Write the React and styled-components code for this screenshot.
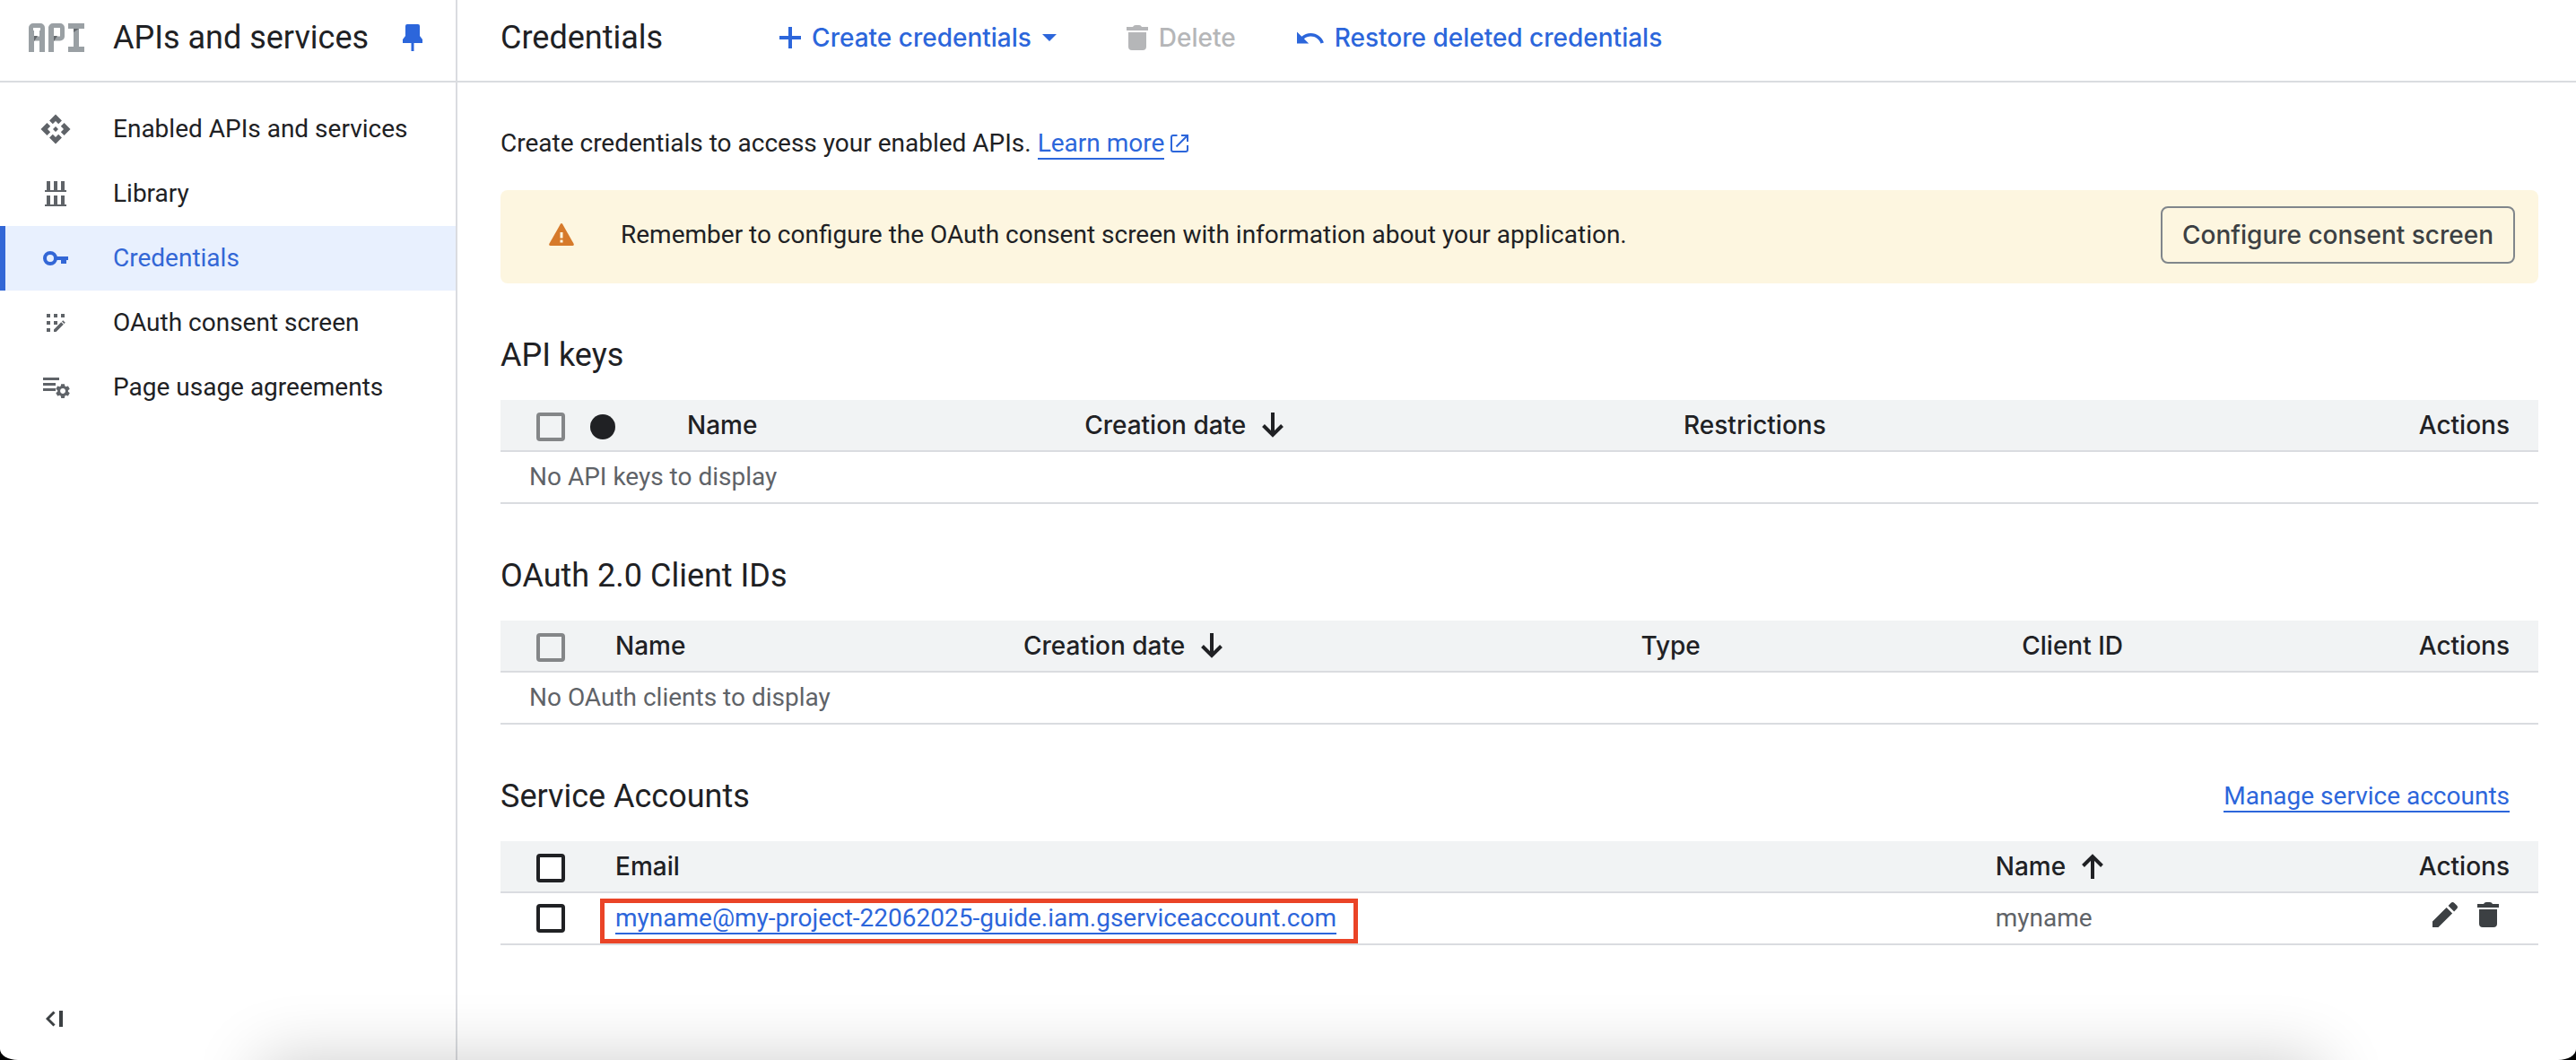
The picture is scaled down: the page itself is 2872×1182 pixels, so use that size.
import React from 'react';
import styled, { createGlobalStyle } from 'styled-components';

const color = {
  text: '#202124',
  muted: '#5f6368',
  icon: '#3c4043',
  link: '#2c66db',
  active: '#3367d6',
  activeBg: '#e8f0fe',
  line: '#dadce0',
  head: '#f1f3f4',
  disabled: '#b5b6b8',
  banner: '#fdf6e0',
  warning: '#d67a2b',
};

const body = "Roboto, 'Liberation Sans', sans-serif";
const label = "Inter, 'Liberation Sans', sans-serif";

const GlobalStyle = createGlobalStyle`
  *, *::before, *::after { box-sizing: border-box; }
  body {
    margin: 0;
    background: #000;
    color: ${color.text};
    font: 400 28px/32px ${body};
  }
  svg { display: block; flex: none; }
  button { font: inherit; color: inherit; background: none; border: 0; padding: 0; cursor: pointer; }
`;

/* ---------- layout ---------- */

const Page = styled.div`
  display: grid;
  grid-template-columns: 510px minmax(0, 1fr);
  min-height: 100vh;
  background: #fff;
  border-radius: 0 0 20px 20px / 0 0 12px 12px;
  overflow: hidden;
`;

const Sidebar = styled.aside`
  display: flex;
  flex-direction: column;
  border-right: 2px solid ${color.line};
`;

const Bar = styled.header`
  display: flex;
  align-items: center;
  height: 92px;
  padding: 0 0 6px;
  border-bottom: 2px solid ${color.line};
`;

const SidebarBar = styled(Bar)`
  padding-left: 32px;
  padding-right: 37px;
  gap: 32px;
`;

const MainBar = styled(Bar)`
  padding-left: 48px;
  gap: 130px;
`;

const Title = styled.h1`
  margin: 0;
  font-size: 36px;
  line-height: 44px;
  font-weight: 400;
`;

const SidebarTitle = styled(Title).attrs({ as: 'h2' })`
  flex: 1;
`;

const Nav = styled.nav`
  display: flex;
  flex-direction: column;
  flex: 1;
  padding-top: 16px;
`;

const NavLink = styled.a`
  display: flex;
  align-items: center;
  gap: 46px;
  height: 72px;
  padding-left: 38px;
  border-left: 6px solid ${(p) => (p.$active ? color.active : 'transparent')};
  background: ${(p) => (p.$active ? color.activeBg : 'transparent')};
  color: ${(p) => (p.$active ? color.active : color.text)};
  text-decoration: none;

  svg { color: ${(p) => (p.$active ? color.active : color.muted)}; }
`;

const CollapseButton = styled.button`
  display: flex;
  align-items: center;
  align-self: flex-start;
  height: 48px;
  margin-bottom: 22px;
  padding: 0 16px 0 51px;
  color: ${color.icon};
`;

const PinButton = styled.button`
  color: ${color.link};
`;

const Toolbar = styled.div`
  display: flex;
  align-items: center;
  gap: 68px;
`;

const ToolButton = styled.button`
  display: flex;
  align-items: center;
  gap: 12px;
  font-family: ${label};
  font-weight: 500;
  color: ${color.link};

  &:disabled { color: ${color.disabled}; cursor: default; }
`;

const Content = styled.main`
  padding: 50px 42px 48px 48px;
`;

const Intro = styled.p`
  display: flex;
  align-items: center;
  gap: 7px;
  margin: 0 0 34px;
  line-height: 36px;
`;

const Link = styled.a`
  display: inline-block;
  padding-top: 2px;
  line-height: 32px;
  border-bottom: 2px solid ${color.link};
  color: ${color.link};
  text-decoration: none;
`;

const Banner = styled.div`
  display: flex;
  align-items: center;
  gap: 52px;
  padding: 18px 26px 22px 54px;
  border-radius: 8px;
  background: ${color.banner};
`;

const BannerText = styled.span`
  flex: 1;
`;

const OutlineButton = styled.button`
  height: 64px;
  padding: 0 22px;
  border: 2px solid #80868b;
  border-radius: 8px;
  font-family: ${label};
  font-weight: 500;
  color: ${color.icon};
`;

const Section = styled.section`
  margin-top: 58px;
`;

const SectionHead = styled.div`
  display: flex;
  align-items: center;
  justify-content: space-between;
  height: 44px;
  margin-bottom: 28px;
  padding-right: 32px;
`;

const SectionTitle = styled(Title).attrs({ as: 'h3' })``;

/* ---------- tables ---------- */

const Table = styled.table`
  width: 100%;
  table-layout: fixed;
  border-collapse: separate;
  border-spacing: 0;
`;

const Th = styled.th`
  width: ${(p) => p.$width || 'auto'};
  height: 58px;
  padding: 0 ${(p) => (p.$end ? '32px' : '0')} 0 0;
  border-bottom: 2px solid ${color.line};
  background: ${color.head};
  font-family: ${label};
  font-weight: 500;
  text-align: ${(p) => (p.$end ? 'right' : 'left')};
  vertical-align: middle;
`;

const Td = styled.td`
  height: 58px;
  padding: 0 0 0 ${(p) => (p.$inset ? '32px' : '0')};
  border-bottom: 2px solid ${color.line};
  color: ${color.muted};
  vertical-align: middle;
`;

const SelectCell = styled.div`
  display: flex;
  align-items: center;
  gap: 28px;
  padding: ${(p) => (p.$head ? '4px' : '0')} 0 0 40px;
`;

const SortLabel = styled.span`
  display: flex;
  align-items: center;
  gap: 18px;
`;

const Checkbox = styled.input.attrs({ type: 'checkbox' })`
  appearance: none;
  width: 32px;
  height: 32px;
  margin: 0;
  border: 4px solid ${color.text};
  border-radius: 4px;
  background: #fff;

  &:checked { background: ${color.text}; }
  &:disabled { border-color: #848688; background: transparent; }
`;

const StatusDot = styled.span`
  width: 28px;
  height: 28px;
  border-radius: 50%;
  background: ${color.text};
`;

const EmailCell = styled.div`
  display: flex;
`;

const Highlighted = styled.span`
  position: relative;
  display: flex;

  &::after {
    content: '';
    position: absolute;
    inset: -4px -24px -10px -17px;
    border: 5px solid #ea4427;
    pointer-events: none;
  }
`;

const RowActions = styled.div`
  display: flex;
  justify-content: flex-end;
  gap: 22px;
  padding: 0 44px 8px 0;
  color: ${color.icon};
`;

/* Soft shade cast over the lower edge of the window */
const EdgeShade = styled.div`
  position: fixed;
  top: 100%;
  left: 290px;
  right: 284px;
  height: 200px;
  box-shadow: 0 0 76px rgba(0, 0, 0, 0.2);
  pointer-events: none;
`;

/* ---------- icons ---------- */

const Svg = ({ w, h = w, box, children }) => (
  <svg width={w} height={h} viewBox={box || `0 0 ${w} ${h}`} fill="currentColor" aria-hidden="true">
    {children}
  </svg>
);

const ApiLogo = () => (
  <Svg w={62} h={32}>
    <g fill="none" stroke="#9aa0a4" strokeWidth="5">
      <rect x="2.5" y="2.5" width="13" height="14.5" rx="2.5" />
      <rect x="24.5" y="2.5" width="13" height="14.5" rx="2.5" />
    </g>
    <g fill="#9aa0a4">
      <rect x="0" y="8" width="6" height="24" />
      <rect x="12" y="8" width="6" height="24" />
      <rect x="22" y="4" width="6" height="28" />
      <rect x="44" y="0" width="18" height="6" />
      <rect x="50" y="6" width="6" height="20" />
      <rect x="44" y="26" width="18" height="6" />
    </g>
    <g fill="#63686c">
      <polygon points="6,14 10,14 6,20" />
      <polygon points="28,14 32,14 28,20" />
      <polygon points="50,6 56,6 50,10" />
    </g>
  </Svg>
);

const PinIcon = () => (
  <Svg w={22} h={30}>
    <path d="M5 0h12q2 0 2 2v11l3 4v4H0v-4l3-4V2q0-2 2-2z" />
    <rect x="9.5" y="20" width="3" height="10" />
  </Svg>
);

const EnabledIcon = () => (
  <Svg w={36} box="0 0 24 24">
    <path d="M14 12l-2 2-2-2 2-2 2 2zm-2-6l2.12 2.12 2.5-2.5L12 1 7.38 5.62l2.5 2.5L12 6zm-6 6l2.12-2.12-2.5-2.5L1 12l4.62 4.62 2.5-2.5L6 12zm12 0l-2.12 2.12 2.5 2.5L23 12l-4.62-4.62-2.5 2.5L18 12zm-6 6l-2.12-2.12-2.5 2.5L12 23l4.62-4.62-2.5-2.5L12 18z" />
  </Svg>
);

const LibraryIcon = () => (
  <Svg w={36}>
    <path d="M8 4h4v10H8zM16 4h4v10h-4zM24 4h4v10h-4zM6 14h24v2H6zM8 20h4v10H8zM16 20h4v10h-4zM24 20h4v10h-4zM6 30h24v2H6z" />
  </Svg>
);

const KeyIcon = () => (
  <Svg w={36}>
    <circle cx="12" cy="18" r="6" fill="none" stroke="currentColor" strokeWidth="4" />
    <path d="M18 16h14v4h-2v4h-6v-4h-6z" />
  </Svg>
);

const ConsentIcon = () => (
  <Svg w={36}>
    <path d="M8 8h4v4H8zM16 8h4v4h-4zM24 8h4v4h-4zM8 16h4v4H8zM16 16h4v4h-4zM8 24h4v4H8z" />
    <path d="M16 28v-2.6l8.2-8.2 2.6 2.6-8.2 8.2zM25 16.4l1.2-1.2 2.6 2.6-1.2 1.2z" />
  </Svg>
);

const AgreementsIcon = () => (
  <Svg w={36}>
    <path d="M4 7h18v3H4zM4 13h14v3H4zM4 19h14v3H4z" />
    <g transform="translate(16.2 12.2) scale(.82)">
      <path d="M19.14 12.94c.04-.3.06-.61.06-.94 0-.32-.02-.64-.07-.94l2.03-1.58c.18-.14.23-.41.12-.61l-1.92-3.32c-.12-.22-.37-.29-.59-.22l-2.39.96c-.5-.38-1.03-.7-1.62-.94l-.36-2.54c-.04-.24-.24-.41-.48-.41h-3.84c-.24 0-.43.17-.47.41l-.36 2.54c-.59.24-1.13.57-1.62.94l-2.39-.96c-.22-.08-.47 0-.59.22L2.74 8.87c-.12.21-.08.47.12.61l2.03 1.58c-.05.3-.09.63-.09.94s.02.64.07.94l-2.03 1.58c-.18.14-.23.41-.12.61l1.92 3.32c.12.22.37.29.59.22l2.39-.96c.5.38 1.03.7 1.62.94l.36 2.54c.05.24.24.41.48.41h3.84c.24 0 .44-.17.47-.41l.36-2.54c.59-.24 1.13-.56 1.62-.94l2.39.96c.22.08.47 0 .59-.22l1.92-3.32c.12-.22.07-.47-.12-.61l-2.01-1.58zM12 15.6c-1.98 0-3.6-1.62-3.6-3.6s1.62-3.6 3.6-3.6 3.6 1.62 3.6 3.6-1.62 3.6-3.6 3.6z" />
    </g>
  </Svg>
);

const CollapseIcon = () => (
  <Svg w={20} h={18}>
    <path d="M9.5 1.5L2 9l7.5 7.5" fill="none" stroke="currentColor" strokeWidth="3" />
    <rect x="15" y="0" width="4" height="18" />
  </Svg>
);

const PlusIcon = () => (
  <Svg w={24}>
    <path d="M10 0h4v10h10v4H14v10h-4V14H0v-4h10z" />
  </Svg>
);

const CaretIcon = () => (
  <Svg w={26} h={8}>
    <path d="M0 0h16L8 8z" />
  </Svg>
);

const TrashIcon = () => (
  <Svg w={24} h={28}>
    <path d="M0 2h7q1-2 3-2h4q2 0 3 2h7v4H0zM2 8h20v16q0 4-4 4H6q-4 0-4-4z" />
  </Svg>
);

const UndoIcon = () => (
  <Svg w={30} h={14} box="2 7 20.5 9">
    <path d="M12.5 8c-2.65 0-5.05.99-6.9 2.6L2 7v9h9l-3.62-3.62c1.39-1.16 3.16-1.88 5.12-1.88 3.54 0 6.55 2.31 7.6 5.5l2.37-.78C21.08 11.03 17.15 8 12.5 8z" />
  </Svg>
);

const ExternalIcon = () => (
  <Svg w={20}>
    <g fill="none" stroke={color.link} strokeWidth="2">
      <path d="M7.5 1H3Q1 1 1 3v14q0 2 2 2h14q2 0 2-2v-5" />
      <path d="M12 1h7v7M6.5 13.5L18.5 1.5" />
    </g>
  </Svg>
);

const WarningIcon = () => (
  <Svg w={28} h={26}>
    <path fill={color.warning} d="M12.9.8q1.1-1.6 2.2 0l12.5 22q.8 2.2-1.4 2.2H1.8q-2.2 0-1.4-2.2z" />
    <path fill={color.banner} d="M12.5 10h3v6.5h-3zM12.5 18.5h3v3h-3z" />
  </Svg>
);

const SortIcon = ({ up }) => (
  <Svg w={24} h={28}>
    <g transform={up ? undefined : 'rotate(180 12 14)'} fill="none" stroke="currentColor" strokeWidth="4">
      <path d="M12 28V3M1.5 13.5L12 3l10.5 10.5" />
    </g>
  </Svg>
);

const PencilIcon = () => (
  <Svg w={28}>
    <path d="M0 28v-6.5L15.6 5.9l6.5 6.5L6.5 28zM17.6 3.9L20.4 1q2-2 4 0L27 3.6q2 2 0 4l-2.9 2.8z" />
  </Svg>
);

/* ---------- page ---------- */

const navItems = [
  { text: 'Enabled APIs and services', Icon: EnabledIcon },
  { text: 'Library', Icon: LibraryIcon },
  { text: 'Credentials', Icon: KeyIcon, active: true },
  { text: 'OAuth consent screen', Icon: ConsentIcon },
  { text: 'Page usage agreements', Icon: AgreementsIcon },
];

const Sorted = ({ up, children }) => (
  <SortLabel>
    {children}
    <SortIcon up={up} />
  </SortLabel>
);

export default function App() {
  return (
    <>
      <GlobalStyle />
      <Page>
        <Sidebar>
          <SidebarBar>
            <ApiLogo />
            <SidebarTitle>APIs and services</SidebarTitle>
            <PinButton aria-label="Unpin menu"><PinIcon /></PinButton>
          </SidebarBar>
          <Nav>
            {navItems.map(({ text, Icon, active }) => (
              <NavLink key={text} href="#" $active={active} aria-current={active ? 'page' : undefined}>
                <Icon />
                {text}
              </NavLink>
            ))}
          </Nav>
          <CollapseButton aria-label="Hide menu"><CollapseIcon /></CollapseButton>
        </Sidebar>

        <div>
          <MainBar>
            <Title>Credentials</Title>
            <Toolbar>
              <ToolButton><PlusIcon />Create credentials<CaretIcon /></ToolButton>
              <ToolButton disabled><TrashIcon />Delete</ToolButton>
              <ToolButton><UndoIcon />Restore deleted credentials</ToolButton>
            </Toolbar>
          </MainBar>

          <Content>
            <Intro>
              Create credentials to access your enabled APIs.
              <Link href="#">Learn more</Link>
              <ExternalIcon />
            </Intro>

            <Banner>
              <WarningIcon />
              <BannerText>
                Remember to configure the OAuth consent screen with information about your application.
              </BannerText>
              <OutlineButton>Configure consent screen</OutlineButton>
            </Banner>

            <Section>
              <SectionHead><SectionTitle>API keys</SectionTitle></SectionHead>
              <Table>
                <thead>
                  <tr>
                    <Th $width="208px">
                      <SelectCell $head>
                        <Checkbox disabled aria-label="Select all API keys" />
                        <StatusDot />
                      </SelectCell>
                    </Th>
                    <Th>Name</Th>
                    <Th $width="29.4%"><Sorted>Creation date</Sorted></Th>
                    <Th $width="34.9%">Restrictions</Th>
                    <Th $width="160px" $end>Actions</Th>
                  </tr>
                </thead>
                <tbody>
                  <tr><Td colSpan={5} $inset>No API keys to display</Td></tr>
                </tbody>
              </Table>
            </Section>

            <Section>
              <SectionHead><SectionTitle>OAuth 2.0 Client IDs</SectionTitle></SectionHead>
              <Table>
                <thead>
                  <tr>
                    <Th $width="128px">
                      <SelectCell $head>
                        <Checkbox disabled aria-label="Select all OAuth clients" />
                      </SelectCell>
                    </Th>
                    <Th>Name</Th>
                    <Th $width="30.3%"><Sorted>Creation date</Sorted></Th>
                    <Th $width="18.7%">Type</Th>
                    <Th $width="18.3%">Client ID</Th>
                    <Th $width="160px" $end>Actions</Th>
                  </tr>
                </thead>
                <tbody>
                  <tr><Td colSpan={6} $inset>No OAuth clients to display</Td></tr>
                </tbody>
              </Table>
            </Section>

            <Section>
              <SectionHead>
                <SectionTitle>Service Accounts</SectionTitle>
                <Link href="#">Manage service accounts</Link>
              </SectionHead>
              <Table>
                <thead>
                  <tr>
                    <Th $width="128px">
                      <SelectCell $head>
                        <Checkbox aria-label="Select all service accounts" />
                      </SelectCell>
                    </Th>
                    <Th>Email</Th>
                    <Th $width="19.6%"><Sorted up>Name</Sorted></Th>
                    <Th $width="160px" $end>Actions</Th>
                  </tr>
                </thead>
                <tbody>
                  <tr>
                    <Td>
                      <SelectCell><Checkbox aria-label="Select myname" /></SelectCell>
                    </Td>
                    <Td>
                      <EmailCell>
                        <Highlighted>
                          <Link href="#">myname@my-project-22062025-guide.iam.gserviceaccount.com</Link>
                        </Highlighted>
                      </EmailCell>
                    </Td>
                    <Td>myname</Td>
                    <Td>
                      <RowActions>
                        <button aria-label="Edit service account"><PencilIcon /></button>
                        <button aria-label="Delete service account"><TrashIcon /></button>
                      </RowActions>
                    </Td>
                  </tr>
                </tbody>
              </Table>
            </Section>
          </Content>
        </div>
      </Page>
      <EdgeShade />
    </>
  );
}
